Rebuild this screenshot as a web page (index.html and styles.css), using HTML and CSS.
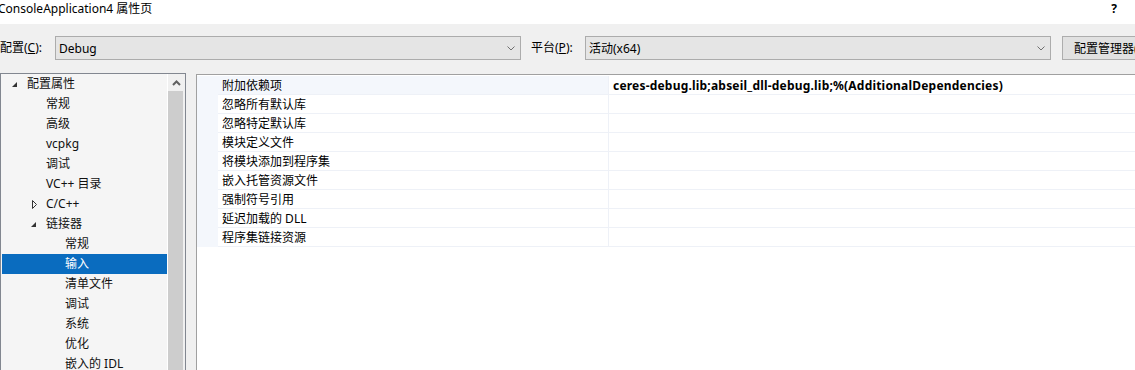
FILE: index.html
```html
<!DOCTYPE html>
<html lang="zh-CN">
<head>
    <meta charset="UTF-8">
    <meta name="viewport" content="width=device-width, initial-scale=1.0">
    <title>ConsoleApplication4 属性页</title>
    <link rel="stylesheet" href="styles.css">
</head>
<body>

    <div class="titleBar">
        <span class="titleText">ConsoleApplication4 属性页</span>
        <span class="helpBtn">?</span>
    </div>

    <div class="dialog">

        <div class="configRow">
            <span class="fieldLabel">配置(<u>C</u>):</span>
            <div class="combo cfgCombo">
                <span>Debug</span>
                <svg class="chevron" width="8" height="5" viewBox="0 0 8 5"><polyline points="0.5,0.5 4,4 7.5,0.5" fill="none" stroke="#707070" stroke-width="1"/></svg>
            </div>
            <span class="fieldLabel platLabel">平台(<u>P</u>):</span>
            <div class="combo platCombo">
                <span>活动(x64)</span>
                <svg class="chevron" width="8" height="5" viewBox="0 0 8 5"><polyline points="0.5,0.5 4,4 7.5,0.5" fill="none" stroke="#707070" stroke-width="1"/></svg>
            </div>
            <button class="managerBtn">配置管理器(<u>O</u>)...</button>
        </div>

        <div class="panels">

            <div class="treePanel">
                <ul class="tree">
                    <li class="lvl0"><svg class="twisty" width="6" height="6" viewBox="0 0 6 6"><polygon points="5,0 5,5 0,5" fill="#333"/></svg>配置属性</li>
                    <li class="lvl1">常规</li>
                    <li class="lvl1">高级</li>
                    <li class="lvl1">vcpkg</li>
                    <li class="lvl1">调试</li>
                    <li class="lvl1">VC++ 目录</li>
                    <li class="lvl1"><svg class="twisty open" width="6" height="9" viewBox="0 0 6 9"><polygon points="0.5,0.5 4.5,4.5 0.5,8.5" fill="none" stroke="#333"/></svg>C/C++</li>
                    <li class="lvl1"><svg class="twisty" width="6" height="6" viewBox="0 0 6 6"><polygon points="5,0 5,5 0,5" fill="#333"/></svg>链接器</li>
                    <li class="lvl2">常规</li>
                    <li class="lvl2 selected">输入</li>
                    <li class="lvl2">清单文件</li>
                    <li class="lvl2">调试</li>
                    <li class="lvl2">系统</li>
                    <li class="lvl2">优化</li>
                    <li class="lvl2">嵌入的 IDL</li>
                </ul>
                <div class="scrollBar">
                    <div class="scrollUp">
                        <svg width="9" height="6" viewBox="0 0 9 6"><polyline points="1,5 4.5,1.5 8,5" fill="none" stroke="#606060" stroke-width="2"/></svg>
                    </div>
                    <div class="scrollThumb"></div>
                </div>
            </div>

            <div class="gridPanel">
                <div class="gridRow current">
                    <div class="gutter"></div>
                    <div class="nameCell">附加依赖项</div>
                    <div class="valueCell">ceres-debug.lib;abseil_dll-debug.lib;%(AdditionalDependencies)</div>
                </div>
                <div class="gridRow">
                    <div class="gutter"></div>
                    <div class="nameCell">忽略所有默认库</div>
                    <div class="valueCell"></div>
                </div>
                <div class="gridRow">
                    <div class="gutter"></div>
                    <div class="nameCell">忽略特定默认库</div>
                    <div class="valueCell"></div>
                </div>
                <div class="gridRow">
                    <div class="gutter"></div>
                    <div class="nameCell">模块定义文件</div>
                    <div class="valueCell"></div>
                </div>
                <div class="gridRow">
                    <div class="gutter"></div>
                    <div class="nameCell">将模块添加到程序集</div>
                    <div class="valueCell"></div>
                </div>
                <div class="gridRow">
                    <div class="gutter"></div>
                    <div class="nameCell">嵌入托管资源文件</div>
                    <div class="valueCell"></div>
                </div>
                <div class="gridRow">
                    <div class="gutter"></div>
                    <div class="nameCell">强制符号引用</div>
                    <div class="valueCell"></div>
                </div>
                <div class="gridRow">
                    <div class="gutter"></div>
                    <div class="nameCell">延迟加载的 DLL</div>
                    <div class="valueCell"></div>
                </div>
                <div class="gridRow">
                    <div class="gutter"></div>
                    <div class="nameCell">程序集链接资源</div>
                    <div class="valueCell"></div>
                </div>
            </div>

        </div>
    </div>

</body>
</html>
```

FILE: styles.css
```css
body{
    margin: 0;
    width: 1135px;
    height: 370px;
    overflow: hidden;
    background-color: #f0f0f0;
    font-family: "Noto Sans", "Noto Sans CJK SC", sans-serif;
    font-size: 12px;
    color: #000;
}

.titleBar{
    height: 24px;
    background-color: #fff;
    display: flex;
    justify-content: space-between;
    align-items: flex-start;
    padding-top: 1px;
    box-sizing: border-box;
    line-height: 16px;
}

.titleText{
    margin-left: -2px;
}

.helpBtn{
    margin-right: 18px;
    font-weight: bold;
}

.configRow{
    height: 49px;
    display: flex;
    align-items: flex-start;
    padding-top: 12px;
    box-sizing: border-box;
}

.fieldLabel{
    line-height: 24px;
    width: 55px;
    flex-shrink: 0;
}

.platLabel{
    margin-left: 10px;
    width: 54px;
}

.combo{
    width: 466px;
    height: 24px;
    box-sizing: border-box;
    border: 1px solid #acacac;
    background-color: #e5e5e5;
    display: flex;
    align-items: center;
    justify-content: space-between;
    padding: 0 5px 0 3px;
    flex-shrink: 0;
}

.chevron{
    display: block;
}

.managerBtn{
    margin-left: 11px;
    height: 24px;
    width: 120px;
    flex-shrink: 0;
    border: 1px solid #adadad;
    background-color: #e1e1e1;
    font-family: "Noto Sans", "Noto Sans CJK SC", sans-serif;
    font-size: 12px;
    text-align: left;
    padding: 0 0 0 11px;
    white-space: nowrap;
}

.panels{
    display: flex;
    align-items: flex-start;
}

.treePanel{
    width: 186px;
    height: 320px;
    box-sizing: border-box;
    border: 1px solid #828790;
    background-color: #f5f5f5;
    display: flex;
    flex-shrink: 0;
}

.tree{
    list-style: none;
    margin: 0;
    padding: 0 0 0 1px;
    flex: 1;
}

.tree li{
    height: 20px;
    line-height: 20px;
    position: relative;
    color: #111;
    white-space: nowrap;
}

.tree .lvl0{
    padding-left: 25px;
}

.tree .lvl1{
    padding-left: 44px;
}

.tree .lvl2{
    padding-left: 63px;
}

.tree .selected{
    background-color: #0a6cbf;
    color: #fff;
}

.twisty{
    position: absolute;
    top: 8px;
}

.lvl0 .twisty{
    left: 10px;
}

.lvl1 .twisty{
    left: 29px;
}

.lvl1 .twisty.open{
    left: 30px;
    top: 6px;
}

.scrollBar{
    width: 17px;
    border-left: 1px solid #fff;
    background-color: #f0f0f0;
    display: flex;
    flex-direction: column;
}

.scrollUp{
    height: 17px;
    display: flex;
    align-items: center;
    justify-content: center;
    padding-right: 1px;
}

.scrollThumb{
    flex: 1;
    margin-right: 2px;
    background-color: #cdcdcd;
}

.gridPanel{
    flex: 1;
    margin-left: 10px;
    margin-top: 1px;
    height: 320px;
    border-left: 1px solid #a0a0a0;
    border-top: 1px solid #a0a0a0;
    background-color: #fff;
    padding-top: 1px;
    box-sizing: border-box;
}

.gridRow{
    display: flex;
    height: 19px;
    line-height: 20px;
}

.gutter{
    width: 21px;
    background-color: #f4f7fc;
    flex-shrink: 0;
}

.nameCell{
    width: 386px;
    padding-left: 4px;
    border-bottom: 1px solid #eef1f7;
    border-right: 1px solid #eef1f7;
    flex-shrink: 0;
    white-space: nowrap;
    overflow: hidden;
}

.gridRow.current .nameCell{
    background-color: #f4f7fc;
}

.valueCell{
    flex: 1;
    padding-left: 4px;
    border-bottom: 1px solid #eef1f7;
    font-weight: bold;
    letter-spacing: 0.2px;
    white-space: nowrap;
    overflow: hidden;
}
```
